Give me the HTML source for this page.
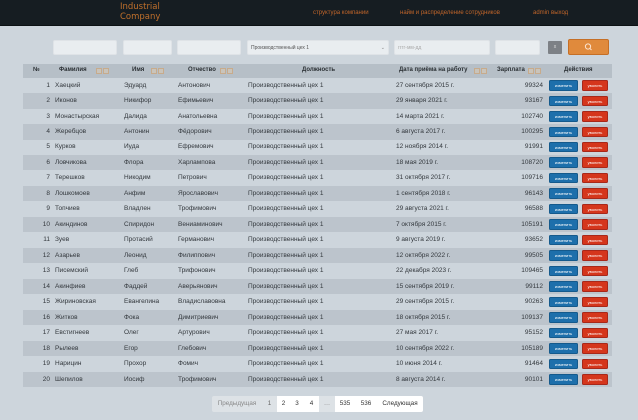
<!DOCTYPE html>
<html><head><meta charset="utf-8"><style>
*{margin:0;padding:0;box-sizing:border-box}
body{width:638px;height:420px;overflow:hidden;background:#cdd5dc;font-family:"Liberation Sans","DejaVu Sans",sans-serif;color:#33383d;position:relative}
.hdr{position:absolute;left:0;top:0;width:638px;height:26px;background:#161d22;border-bottom:1px solid #0c1114}
.logo{position:absolute;left:120px;top:3px;color:#c0702c;font-size:8.5px;line-height:9.5px;font-family:"DejaVu Sans",sans-serif}
.nav{position:absolute;top:10px;color:#c0652a;font-size:6px;white-space:nowrap}
.in{position:absolute;top:40px;height:15px;background:#e9edf0;border:1px solid #dfe3e7;border-radius:2px;font-size:5px;color:#555;padding:4px 3px}
.row{position:absolute;left:23px;width:589px;height:15.5px;font-size:6.5px;line-height:15.5px}
.row span{position:absolute;white-space:nowrap}
.row.e{background:#bcc4cc}
.th{background:#b6bfc7;font-weight:bold;color:#2a2f33;font-size:6px;height:13.5px;line-height:13.5px}
.ic{position:absolute;top:3.5px;width:6px;height:6px;border:1px solid #c7ab8c;background:#c9c4bb}
.b1,.b2{position:absolute;top:2.5px;height:10.5px;border-radius:1.5px;font-size:4px;color:#fff;text-align:center;line-height:10.5px}
.b1{left:526px;width:29px;background:#1d6fab;border:1px solid #155a8c}
.b2{left:559px;width:26px;background:#d5361c;border:1px solid #a8281a}
.pg{position:absolute;top:396px;height:16px;font-size:6.3px;line-height:16px;text-align:center;color:#333}
</style></head><body>
<div class="hdr">
<div class="logo">Industrial<br>Company</div>
<div class="nav" style="left:313px">структура компании</div>
<div class="nav" style="left:400px">найм и распределение сотрудников</div>
<div class="nav" style="left:533px">admin выход</div>
</div>
<div class="in" style="left:53px;width:64px"></div>
<div class="in" style="left:123px;width:49px"></div>
<div class="in" style="left:177px;width:64px"></div>
<div class="in" style="left:247px;width:142px">Производственный цех 1<span style="position:absolute;right:3px;color:#888">⌄</span></div>
<div class="in" style="left:394px;width:96px;color:#aaa">гггг-мм-дд</div>
<div class="in" style="left:495px;width:45px"></div>
<div style="position:absolute;left:548px;top:41px;width:14px;height:13px;background:#7d8186;border-radius:1px;color:#ddd;font-size:5px;text-align:center;line-height:13px">x</div>
<div style="position:absolute;left:568px;top:39px;width:41px;height:16px;background:#e08a3c;border:1px solid #c56f26;border-radius:2px"><svg width="41" height="16" style="position:absolute;left:-1px;top:-1px"><circle cx="20" cy="7.5" r="2.6" fill="none" stroke="#fbe3cf" stroke-width="1"/><line x1="22" y1="9.5" x2="23.5" y2="11" stroke="#fbe3cf" stroke-width="1"/></svg></div>

<div class="row th" style="top:64px">
<span style="left:10px">№</span>
<span style="left:36px">Фамилия</span><i class="ic" style="left:73px"></i><i class="ic" style="left:80px"></i>
<span style="left:109px">Имя</span><i class="ic" style="left:128px"></i><i class="ic" style="left:135px"></i>
<span style="left:165px">Отчество</span><i class="ic" style="left:197px"></i><i class="ic" style="left:204px"></i>
<span style="left:279px">Должность</span>
<span style="left:376px">Дата приёма на работу</span><i class="ic" style="left:451px"></i><i class="ic" style="left:458px"></i>
<span style="left:474px">Зарплата</span><i class="ic" style="left:505px"></i><i class="ic" style="left:512px"></i>
<span style="left:541px">Действия</span>
</div>
<div id="rows"></div>
<script>
var d=[["Хаецкий","Эдуард","Антонович","27 сентября 2015 г.","99324"],["Иконов","Никифор","Ефимьевич","29 января 2021 г.","93167"],["Монастырская","Далида","Анатольевна","14 марта 2021 г.","102740"],["Жеребцов","Антонин","Фёдорович","6 августа 2017 г.","100295"],["Курков","Иуда","Ефремович","12 ноября 2014 г.","91991"],["Ловчикова","Флора","Харлампова","18 мая 2019 г.","108720"],["Терешков","Никодим","Петрович","31 октября 2017 г.","109716"],["Лошкомоев","Анфим","Ярославович","1 сентября 2018 г.","96143"],["Топчиев","Владлен","Трофимович","29 августа 2021 г.","96588"],["Акиндинов","Спиридон","Вениаминович","7 октября 2015 г.","105191"],["Зуев","Протасий","Германович","9 августа 2019 г.","93652"],["Азарьев","Леонид","Филиппович","12 октября 2022 г.","99505"],["Писемский","Глеб","Трифонович","22 декабря 2023 г.","109465"],["Акинфиев","Фаддей","Аверьянович","15 сентября 2019 г.","99112"],["Жириновская","Евангелина","Владиславовна","29 сентября 2015 г.","90263"],["Житков","Фока","Димитриевич","18 октября 2015 г.","109137"],["Евстигнеев","Олег","Артурович","27 мая 2017 г.","95152"],["Рылеев","Егор","Глебович","10 сентября 2022 г.","105189"],["Нарицин","Прохор","Фомич","10 июня 2014 г.","91464"],["Шепилов","Иосиф","Трофимович","8 августа 2014 г.","90101"]];
var h="";
d.forEach(function(r,i){h+='<div class="row'+(i%2?' e':'')+'" style="top:'+(77.6+i*15.47)+'px"><span style="right:562px">'+(i+1)+'</span><span style="left:32px">'+r[0]+'</span><span style="left:101px">'+r[1]+'</span><span style="left:155px">'+r[2]+'</span><span style="left:225px">Производственный цех 1</span><span style="left:373px">'+r[3]+'</span><span style="right:69px">'+r[4]+'</span><div class="b1">изменить</div><div class="b2">уволить</div></div>';});
document.getElementById("rows").innerHTML=h;
</script>
<div class="pg" style="left:212px;width:50px;background:#dde2e6;color:#888;border-radius:2px 0 0 2px">Предыдущая</div>
<div class="pg" style="left:262px;width:15px;background:#dde2e6;color:#666">1</div>
<div class="pg" style="left:277px;width:13px;background:#fff">2</div>
<div class="pg" style="left:290px;width:14px;background:#fff">3</div>
<div class="pg" style="left:304px;width:15px;background:#fff">4</div>
<div class="pg" style="left:319px;width:16px;background:#dde2e6;color:#888">…</div>
<div class="pg" style="left:335px;width:20px;background:#fff">535</div>
<div class="pg" style="left:355px;width:22px;background:#fff">536</div>
<div class="pg" style="left:377px;width:46px;background:#fff;border-radius:0 2px 2px 0">Следующая</div>
</body></html>
